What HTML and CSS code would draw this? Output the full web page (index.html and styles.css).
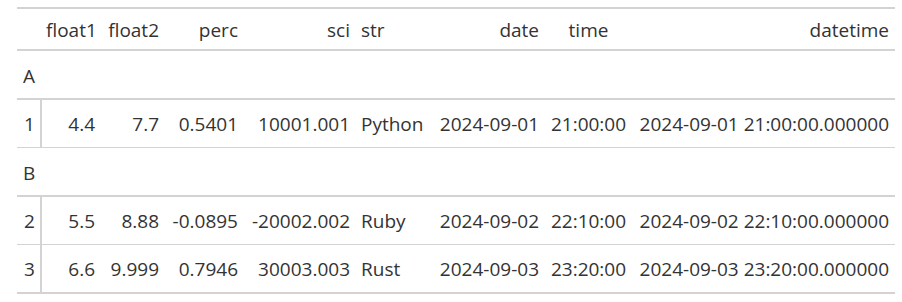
FILE: index.html
```html
<!DOCTYPE html>
<html>
<head>
<meta charset="utf-8">
<link rel="stylesheet" href="styles.css">
</head>
<body>
<div class="wrap">
<table class="gt">
  <colgroup>
    <col class="c-stub"><col class="c-f1"><col class="c-f2"><col class="c-perc"><col class="c-sci"><col class="c-str"><col class="c-date"><col class="c-time"><col class="c-dt">
  </colgroup>
  <thead>
    <tr class="head">
      <th class="stubhead"></th>
      <th class="r">float1</th>
      <th class="r">float2</th>
      <th class="r">perc</th>
      <th class="r">sci</th>
      <th class="l">str</th>
      <th class="r">date</th>
      <th class="c">time</th>
      <th class="r">datetime</th>
    </tr>
  </thead>
  <tbody>
    <tr class="group"><td colspan="9">A</td></tr>
    <tr class="row">
      <td class="stub">1</td>
      <td class="r">4.4</td><td class="r">7.7</td><td class="r">0.5401</td><td class="r">10001.001</td>
      <td class="l">Python</td><td class="r">2024-09-01</td><td class="c">21:00:00</td><td class="r">2024-09-01 21:00:00.000000</td>
    </tr>
    <tr class="group"><td colspan="9">B</td></tr>
    <tr class="row">
      <td class="stub">2</td>
      <td class="r">5.5</td><td class="r">8.88</td><td class="r">-0.0895</td><td class="r">-20002.002</td>
      <td class="l">Ruby</td><td class="r">2024-09-02</td><td class="c">22:10:00</td><td class="r">2024-09-02 22:10:00.000000</td>
    </tr>
    <tr class="row last">
      <td class="stub">3</td>
      <td class="r">6.6</td><td class="r">9.999</td><td class="r">0.7946</td><td class="r">30003.003</td>
      <td class="l">Rust</td><td class="r">2024-09-03</td><td class="c">23:20:00</td><td class="r">2024-09-03 23:20:00.000000</td>
    </tr>
  </tbody>
</table>
</div>
</body>
</html>
```

FILE: styles.css
```css
html, body {
  margin: 0;
  padding: 0;
  background: #ffffff;
}
.wrap {
  padding: 7px 0 0 17px;
}
.gt {
  border-collapse: collapse;
  table-layout: fixed;
  width: 878px;
  font-family: "Open Sans", "Noto Sans", sans-serif;
  font-size: 19px;
  color: #333333;
  border-top: 2px solid #D3D3D3;
  border-bottom: 2px solid #D3D3D3;
}
.c-stub { width: 24px; }
.c-f1 { width: 60px; }
.c-f2 { width: 64px; }
.c-perc { width: 79px; }
.c-sci { width: 112px; }
.c-str { width: 74px; }
.c-date { width: 115px; }
.c-time { width: 88px; }
.c-dt { width: 262px; }

.gt th, .gt td {
  padding: 0 6px 0 5px;
  white-space: nowrap;
  overflow: visible;
  font-weight: normal;
  line-height: 26px;
}
.head th {
  padding-top: 8px;
  padding-bottom: 6px;
  vertical-align: middle;
  border-bottom: 2px solid #D3D3D3;
}
.group td {
  padding: 12px 6px 9px 6px;
  border-bottom: 2px solid #D3D3D3;
}
.row td {
  padding-top: 11px;
  padding-bottom: 10px;
  border-bottom: 1px solid #D3D3D3;
}
.row.last td { border-bottom: 2px solid #D3D3D3; }
.row .stub {
  padding-left: 7px;
  border-right: 2px solid #D3D3D3;
}
.r { text-align: right; }
.l { text-align: left; }
.c { text-align: center; }
```
